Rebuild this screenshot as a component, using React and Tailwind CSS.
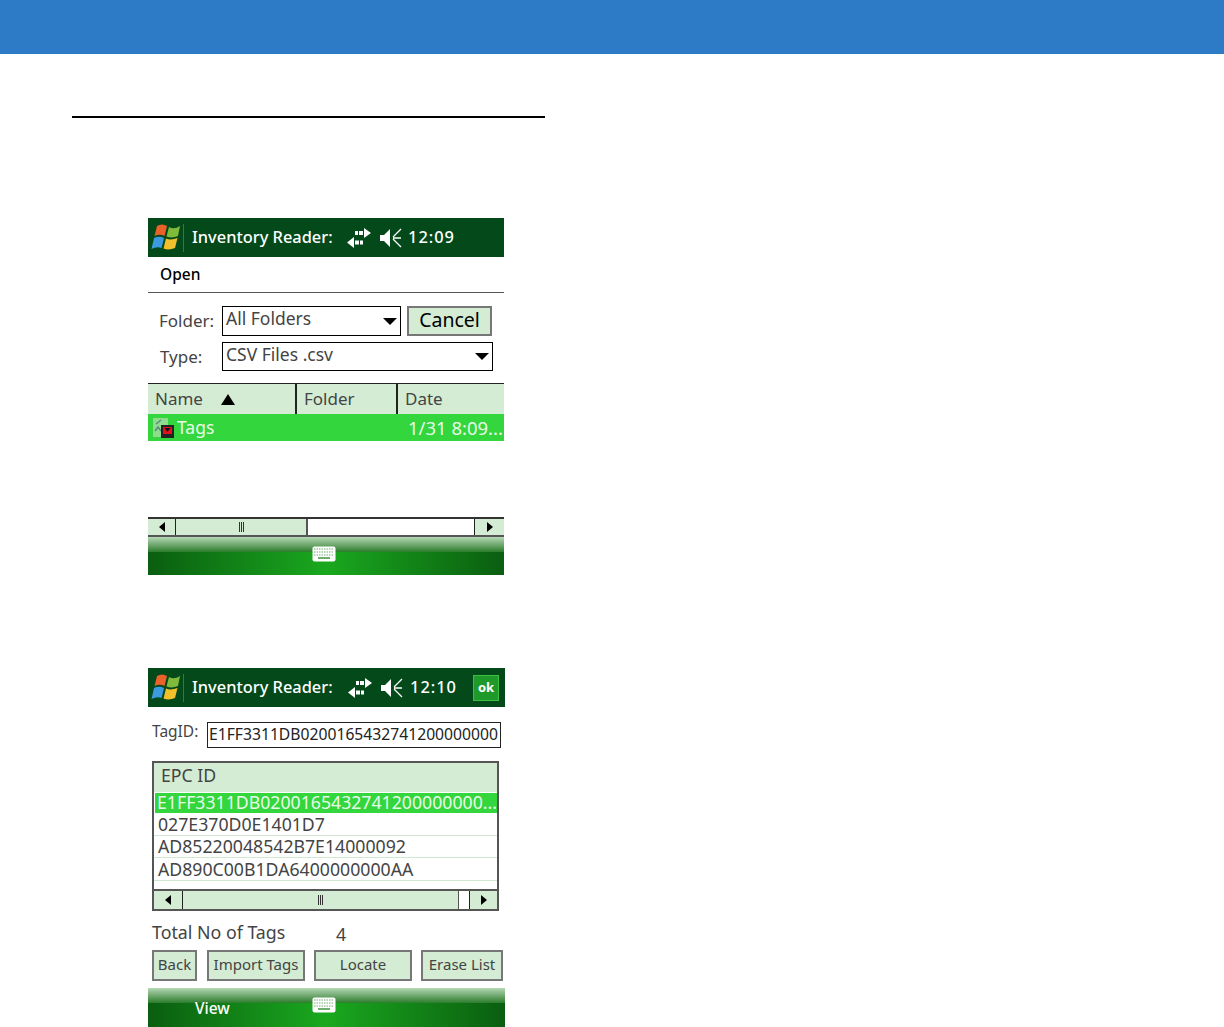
import React from 'react';

function WinLogo() {
  return (
    <svg width="30" height="29" viewBox="0 0 30 29" className="shrink-0">
      <path d="M6 3 Q11 0 16 3 L13.500 13 Q9 10.500 3.500 13 Z" fill="#e8622a" />
      <path d="M18 4 Q23 7 29 3 L27 13 Q21 15.500 15.500 13.500 Z" fill="#7fba3a" />
      <path d="M3 15 Q8 12.500 13 15 L10.500 25 Q6 23 0.500 26 Z" fill="#3b9ae0" />
      <path d="M15 15.500 Q20 17.500 26.500 15 L24 25 Q18 27.500 12.500 25.500 Z" fill="#f2c02c" />
    </svg>
  );
}

function SyncIcon() {
  return (
    <svg width="24" height="20" viewBox="0 0 24 20" className="shrink-0">
      <path d="M17 0 L24 5 L17 10 Z" fill="#fff" />
      <path d="M8 3h3v4H8zM12 3h4v4h-4z" fill="#fff" />
      <path d="M7 9 L0 14.500 L7 20 Z" fill="#fff" />
      <path d="M8 12.500h4v4H8zM13 12.500h3v4h-3z" fill="#fff" />
    </svg>
  );
}

function SpeakerIcon() {
  return (
    <svg width="24" height="22" viewBox="0 0 24 22" className="shrink-0">
      <path d="M1 8 L5 8 L11 2 L11 20 L5 14 L1 14 Z" fill="#fff" />
      <path d="M14 10 L22 2 M14 11 L22 11 M14 12 L22 20" stroke="#fff" strokeWidth="1.300" fill="none" />
    </svg>
  );
}

function TitleBar({ time, ok }) {
  return (
    <div className="flex items-center h-[39px] bg-[#03491a] text-white text-[16.400px] font-medium">
      <div className="ml-[3px]"><WinLogo /></div>
      <div className="ml-[2px] w-px h-[28px] bg-[#2f7a45]" />
      <span className={ok ? 'ml-[8px] w-[156px] whitespace-nowrap' : 'ml-[8px] w-[155px] whitespace-nowrap'}>Inventory Reader:</span>
      <SyncIcon />
      <div className="ml-[8px]"><SpeakerIcon /></div>
      <span className={ok ? 'ml-[6px] tracking-[1px] whitespace-nowrap' : 'ml-[5px] tracking-[1px] whitespace-nowrap'}>{time}</span>
      {ok && (
        <div className="ml-[16px] w-[26px] h-[26px] bg-[#1f9a2a] border border-[#3cc044] flex items-center justify-center text-[13px] font-bold">ok</div>
      )}
    </div>
  );
}

function KeyboardIcon() {
  return (
    <svg width="24" height="16" viewBox="0 0 24 16">
      <rect x="0.500" y="0.500" width="23" height="15" rx="2" fill="#fff" />
      <path d="M2 3h20M2 6h20M2 9h20" stroke="#6fae6f" strokeWidth="1" strokeDasharray="1.500 1" />
      <rect x="6" y="11" width="12" height="2" fill="#6fae6f" />
    </svg>
  );
}

function Taskbar({ height, label }) {
  return (
    <div className="flex flex-col relative" style={{ height }}>
      <div className="h-[15px] bg-[linear-gradient(to_bottom,#b4d8b4,#7fb27f_40%,#2c7d2c)]" />
      <div className="flex-1 bg-[linear-gradient(to_right,#0a5e10,#1aa81e_50%,#0a5e10)]" />
      {label && (
        <span className="absolute left-[47px] top-[9px] text-white text-[15.500px] font-medium">{label}</span>
      )}
      <div className="absolute left-[164px] top-[9px]"><KeyboardIcon /></div>
    </div>
  );
}

function LeftArrow() {
  return <div className="w-0 h-0 border-y-[5px] border-y-transparent border-r-[6px] border-r-black" />;
}

function RightArrow() {
  return <div className="w-0 h-0 border-y-[5px] border-y-transparent border-l-[6px] border-l-black" />;
}

function Grip() {
  return (
    <div className="flex gap-px">
      <div className="w-px h-[10px] bg-[#333]" />
      <div className="w-px h-[10px] bg-[#333]" />
      <div className="w-px h-[10px] bg-[#333]" />
    </div>
  );
}

function Caret() {
  return <div className="w-0 h-0 border-x-[7px] border-x-transparent border-t-[7px] border-t-black" />;
}

function Select({ value, className }) {
  return (
    <div className={`flex items-center justify-between border border-black bg-white pl-[3px] pr-[3px] text-[#444] text-[17.500px] leading-none ${className}`}>
      <span className="whitespace-nowrap pb-[4px]">{value}</span>
      <Caret />
    </div>
  );
}

function Button({ children, className }) {
  return (
    <div className={`flex items-center justify-center pb-[2px] border-2 border-[#777] bg-[#d3ecd3] text-[#444] text-[15px] whitespace-nowrap ${className}`}>
      {children}
    </div>
  );
}

function FileOpenScreen() {
  return (
    <div className="ml-[148px] w-[356px] text-[#444]">
      <TitleBar time="12:09" />
      <div className="h-[36px] border-b border-[#555] flex items-center pl-[12px] text-[15.500px] font-medium text-black">Open</div>

      <div className="flex items-center mt-[13px] h-[30px]">
        <span className="ml-[11px] w-[63px] text-[17px]">Folder:</span>
        <Select value="All Folders" className="w-[179px] h-[30px]" />
        <Button className="ml-[6px] w-[85px] h-[30px] !text-[19.500px] !text-black">Cancel</Button>
      </div>

      <div className="flex items-center mt-[6px] h-[29px]">
        <span className="ml-[12px] w-[62px] text-[17px]">Type:</span>
        <Select value="CSV Files .csv" className="w-[271px] h-[29px]" />
      </div>

      <div className="flex mt-[12px] h-[31px] bg-[#d3ecd3] border-t border-[#222] text-[17px]">
        <div className="w-[149px] border-r-2 border-[#222] pl-[7px] flex items-center">
          Name
          <div className="ml-[18px] w-0 h-0 border-x-[7px] border-x-transparent border-b-[11px] border-b-black" />
        </div>
        <div className="w-[101px] border-r-2 border-[#222] pl-[7px] flex items-center">Folder</div>
        <div className="flex-1 pl-[7px] flex items-center">Date</div>
      </div>

      <div className="flex items-center justify-between h-[27px] bg-[#33d63c] text-[#e8fbe8] text-[17.500px]">
        <div className="flex items-center pl-[4px]">
          <svg width="24" height="22" viewBox="0 0 24 22">
            <rect x="1" y="1" width="15" height="19" fill="#8fdc90" />
            <path d="M4 7 L9 3 M3 14 l3 -4 l3 4" stroke="#5a8a7a" strokeWidth="1.500" fill="none" />
            <rect x="9" y="8" width="13" height="13" fill="#222" />
            <rect x="11" y="10" width="9" height="7" fill="#e01020" />
            <path d="M12.500 11h6l-3 4z" fill="#111" />
          </svg>
          <span className="ml-px">Tags</span>
        </div>
        <span className="pr-[1px] text-[18.500px] whitespace-nowrap">1/31 8:09...</span>
      </div>

      <div className="h-[76px]" />

      <div className="flex h-[20px] border-t-2 border-b-2 border-b-[#555] border-t-[#333]">
        <div className="w-[28px] bg-[#d3ecd3] border-r border-[#222] flex items-center justify-center"><LeftArrow /></div>
        <div className="w-[132px] bg-[#d3ecd3] border-r-2 border-[#555] flex items-center justify-center"><Grip /></div>
        <div className="flex-1 bg-white border-r border-[#222]" />
        <div className="w-[29px] bg-[#d3ecd3] flex items-center justify-center"><RightArrow /></div>
      </div>
      <Taskbar height="38px" />
    </div>
  );
}

const rows = ['027E370D0E1401D7', 'AD85220048542B7E14000092', 'AD890C00B1DA6400000000AA'];

function TagListScreen() {
  return (
    <div className="ml-[148px] w-[357px] mt-[93px] text-[#444]">
      <TitleBar time="12:10" ok />

      <div className="flex items-center mt-[15px] h-[26px]">
        <span className="ml-[4px] w-[55px] text-[15.500px] -mt-[6px]">TagID:</span>
        <div className="w-[294px] h-[26px] border border-[#222] flex items-center pl-[1px] text-[#222] text-[15.700px] whitespace-nowrap">E1FF3311DB0200165432741200000000</div>
      </div>

      <div className="ml-[4px] mt-[13px] w-[347px] h-[150px] border-2 border-[#555] flex flex-col text-[17.700px] leading-none">
        <div className="h-[29px] bg-[#d3ecd3] flex items-center pl-[7px] pb-[3px]">EPC ID</div>
        <div className="flex-1 bg-white pt-[1px]">
          <div className="ml-[1px] h-[20px] bg-[#33d63c] text-[#e8fbe8] flex items-center pl-[2px] whitespace-nowrap">E1FF3311DB0200165432741200000000...</div>
          {rows.map(r => (
            <div key={r} className="h-[22.500px] border-b border-[#cfe8cf] flex items-center pt-[2px] pl-[4px] whitespace-nowrap">{r}</div>
          ))}
        </div>
        <div className="flex h-[20px] border-t-2 border-[#555]">
          <div className="w-[29px] bg-[#d3ecd3] border-r border-[#222] flex items-center justify-center"><LeftArrow /></div>
          <div className="w-[276px] bg-[#d3ecd3] border-r border-[#555] flex items-center justify-center"><Grip /></div>
          <div className="w-[11px] bg-white border-r border-[#222]" />
          <div className="flex-1 bg-[#d3ecd3] flex items-center justify-center"><RightArrow /></div>
        </div>
      </div>

      <div className="flex items-center h-[39px] pt-[4px] text-[17.800px]">
        <span className="ml-[4px] w-[184px]">Total No of Tags</span>
        <span className="mt-[4px]">4</span>
      </div>

      <div className="flex h-[31px]">
        <Button className="ml-[4px] w-[45px]">Back</Button>
        <Button className="ml-[10px] w-[98px]">Import Tags</Button>
        <Button className="ml-[9px] w-[98px]">Locate</Button>
        <Button className="ml-[9px] w-[82px]">Erase List</Button>
      </div>

      <div className="mt-[7px]">
        <Taskbar height="39px" label="View" />
      </div>
    </div>
  );
}

export default function App() {
  return (
    <div className="w-[1224px] h-[1027px] overflow-hidden bg-white font-['Noto_Sans','DejaVu_Sans',sans-serif]">
      <div className="h-[54px] bg-[#2d7ac7]" />
      <div className="ml-[72px] mt-[62px] w-[473px] h-[2px] bg-black" />
      <div className="h-[100px]" />
      <FileOpenScreen />
      <TagListScreen />
    </div>
  );
}
